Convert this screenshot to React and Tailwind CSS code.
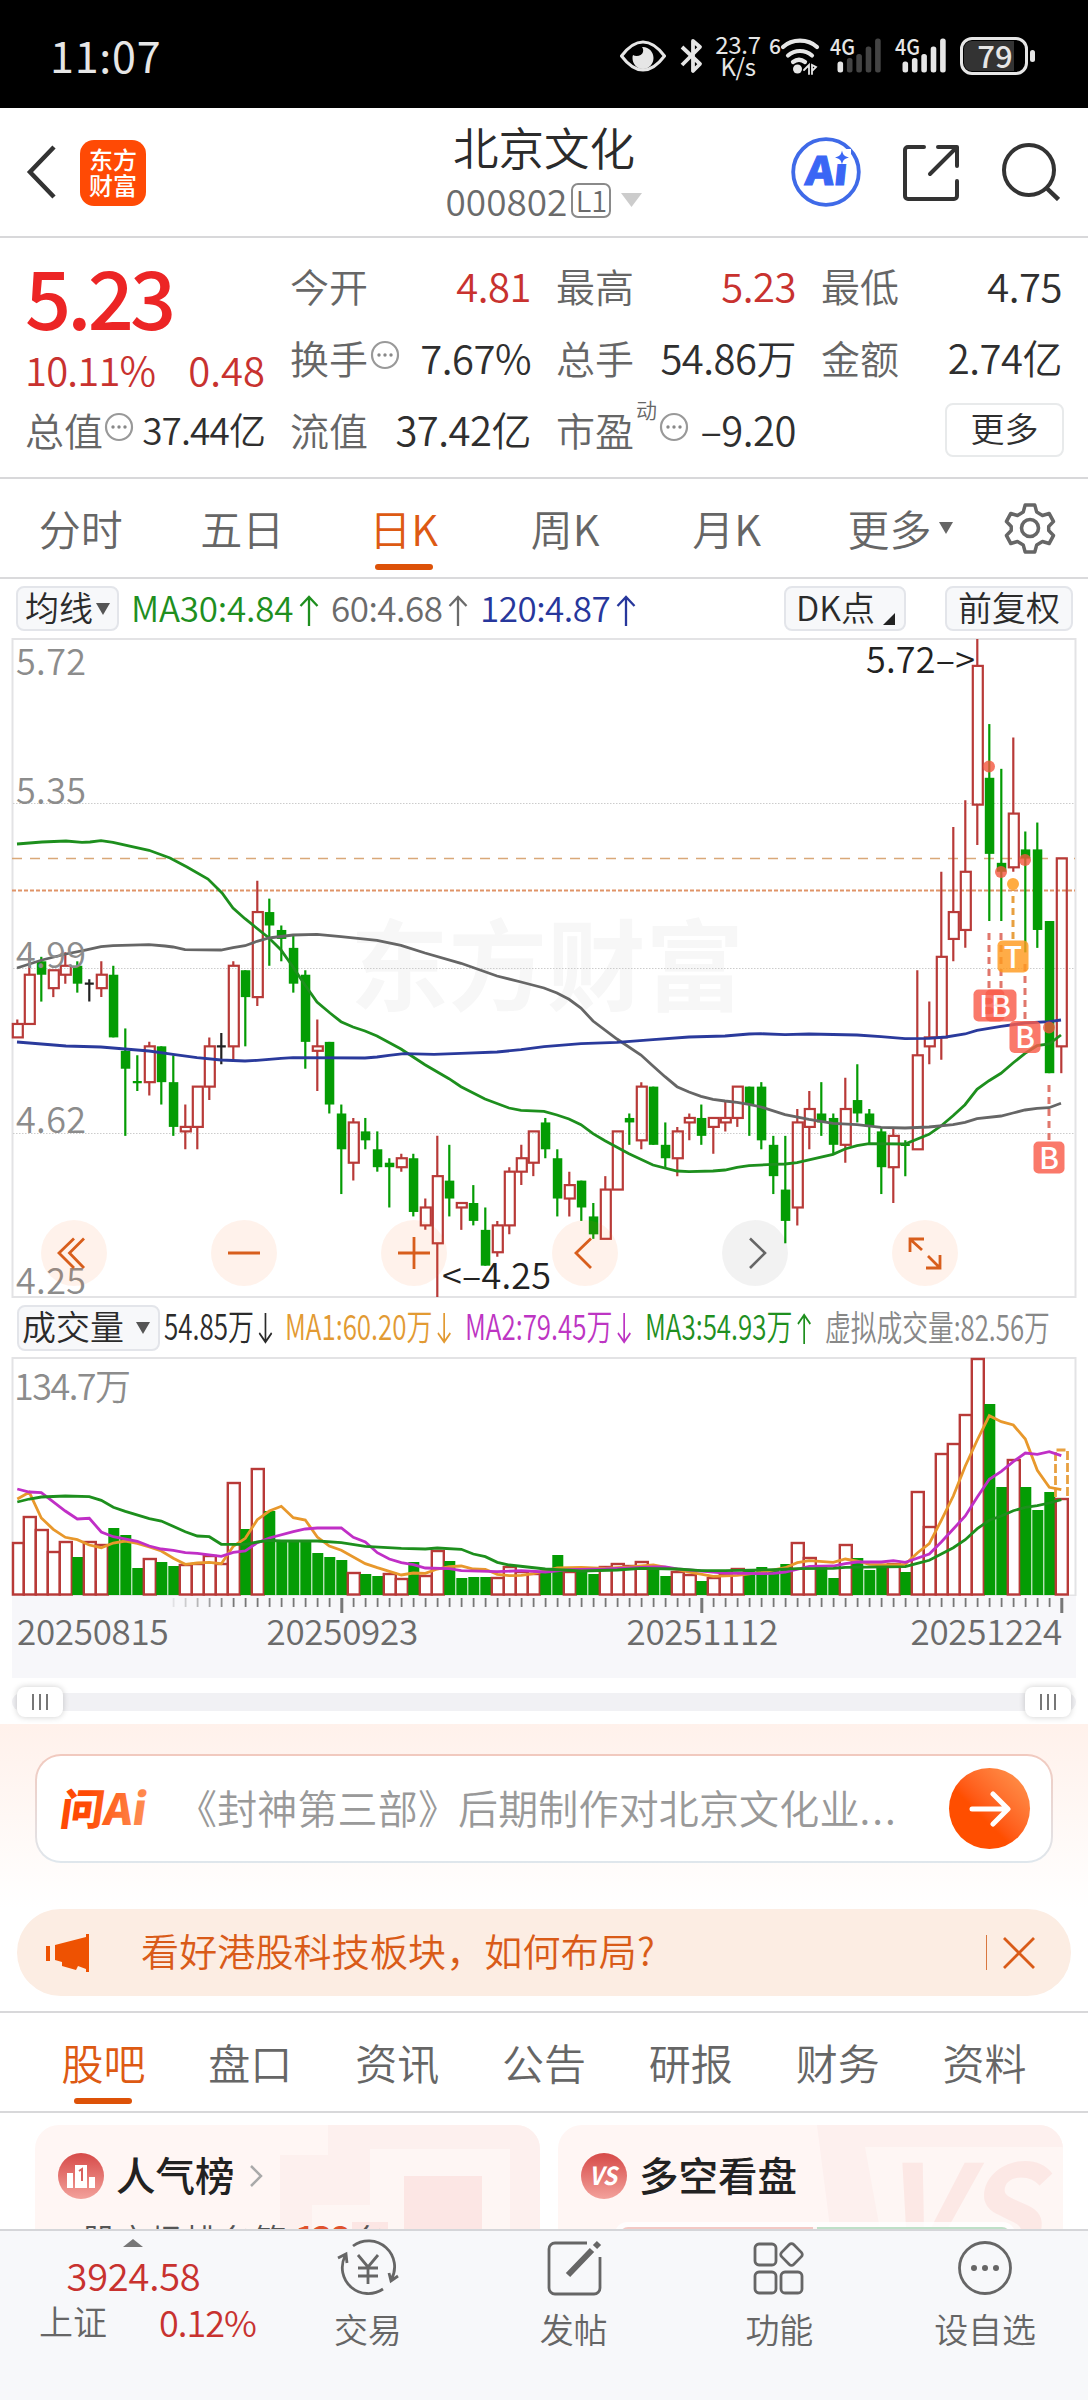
import React from "react";

const RED = "#b83a38";
const GREEN = "#049c04";
const STEP = 12;
const X0 = 17.3;

// [color, high, body top, body bottom, low], in cents above 4.25
const candles = [
  ["r", 62, 61, 58, 58], ["r", 77, 72, 61, 61], ["g", 76, 75, 72, 66], ["r", 73, 73, 69, 67],
  ["r", 77, 74, 72, 70], ["g", 75, 74, 70, 68], ["k", 71, 70, 70, 66], ["r", 75, 72, 69, 67],
  ["g", 74, 72, 58, 58], ["g", 60, 55, 51, 36], ["g", 54, 48, 48, 46], ["r", 57, 56, 48, 45],
  ["g", 56, 56, 48, 43], ["g", 54, 48, 38, 36], ["r", 43, 38, 37, 33], ["r", 47, 47, 38, 33],
  ["r", 58, 56, 47, 44], ["k", 59, 56, 56, 52], ["r", 75, 74, 56, 53], ["g", 73, 73, 67, 56],
  ["r", 93, 86, 67, 65], ["g", 89, 86, 83, 74], ["g", 83, 82, 80, 75], ["g", 81, 78, 70, 68],
  ["g", 73, 72, 57, 51], ["r", 62, 56, 55, 46], ["g", 57, 57, 43, 41], ["g", 43, 41, 33, 23],
  ["r", 40, 39, 30, 26], ["g", 40, 37, 35, 33], ["g", 37, 33, 29, 28], ["g", 31, 30, 29, 20],
  ["r", 32, 31, 29, 28], ["g", 32, 31, 19, 18], ["r", 22, 20, 16, 15], ["r", 36, 27, 12, 0],
  ["g", 34, 26, 22, 18], ["r", 21, 21, 20, 15], ["g", 25, 21, 17, 16], ["g", 20, 15, 7, 7],
  ["r", 17, 16, 10, 9], ["r", 29, 28, 16, 14], ["r", 34, 31, 28, 25], ["r", 37, 37, 30, 27],
  ["g", 40, 39, 33, 31], ["g", 33, 31, 22, 18], ["r", 28, 25, 22, 18], ["g", 26, 26, 20, 17],
  ["g", 21, 18, 14, 13], ["r", 27, 24, 13, 13], ["r", 37, 37, 24, 24], ["g", 41, 40, 39, 34],
  ["r", 48, 47, 35, 33], ["g", 47, 47, 34, 34], ["g", 39, 34, 31, 29], ["r", 38, 37, 31, 27],
  ["r", 41, 40, 39, 35], ["g", 43, 40, 36, 34], ["r", 40, 40, 38, 32], ["r", 44, 40, 39, 37],
  ["r", 47, 47, 40, 38], ["g", 47, 47, 43, 36], ["g", 48, 47, 35, 33], ["g", 36, 34, 27, 23],
  ["g", 36, 24, 17, 12], ["r", 42, 39, 20, 16], ["r", 46, 42, 38, 33], ["g", 48, 41, 39, 36],
  ["g", 41, 40, 34, 32], ["r", 49, 42, 34, 30], ["g", 52, 44, 41, 39], ["g", 42, 41, 38, 34],
  ["g", 38, 37, 29, 23], ["r", 38, 36, 29, 21], ["g", 35, 34, 34, 27], ["r", 73, 54, 33, 33],
  ["r", 66, 58, 56, 52], ["r", 95, 76, 58, 53], ["r", 105, 86, 80, 75], ["r", 111, 95, 82, 78],
  ["r", 147, 141, 110, 101], ["g", 128, 116, 99, 84], ["g", 118, 97, 95, 84], ["r", 125, 108, 96, 95],
  ["g", 104, 100, 98, 77], ["g", 106, 100, 82, 78], ["g", 84, 84, 50, 50], ["r", 98, 98, 56, 50],
];

const ma30 =
  "17,844 42,842 66,841 82,842.3 90,842 101,840.7 113,842.3 132,846.7 149,850.3 170,858 187,867 208,879 222,893 233,908 245,918.7 269,938 281,950 293,967 305,985 317,1002 330,1013 341,1021.7 353,1027 365,1031 377,1036 401,1049 425,1064.7 449,1078.7 461,1086.7 485,1099 509,1108 521,1110.3 544,1111.3 557,1115 569,1119 581,1124.7 593,1133.7 605,1140.7 629,1153.7 653,1165 677,1171 689,1171.7 713,1171 725,1170 737,1167.3 749,1165.7 773,1164.3 785,1164 797,1162.7 833,1154.3 845,1149 857,1145.7 869,1143.7 905,1144 929,1134.3 941,1126 953,1115.7 965,1104.7 977,1089.3 989,1080.7 1001,1073.3 1013,1063 1025,1053.3 1037,1045.7 1049,1044 1061,1035";
const ma60 =
  "17,968 42,960 66,954 83,950.7 101,946.7 113,945.7 149,944.7 165,946 173,947 185,949.7 221,950 233,947.7 245,945.7 257,941.3 269,938 293,935 317,934.3 341,936.7 377,940.3 401,945.3 425,953 461,963.3 497,976 521,982 544,988 557,993 569,999.3 581,1008 593,1021 617,1039 641,1055 653,1066 665,1076.7 677,1086.7 689,1092 701,1096.3 713,1099.3 725,1101 737,1102.3 749,1104.3 761,1107 785,1114.7 809,1119.3 833,1123.3 857,1124.7 881,1127.3 905,1128 929,1127 953,1124.7 965,1122.3 977,1118.7 1001,1116 1013,1113 1025,1110 1037,1108.3 1049,1107.7 1061,1103.3";
const ma120 =
  "17,1042 66,1046 101,1047 125,1049 149,1051 173,1054.3 197,1057.7 221,1060 245,1061 257,1060.3 281,1058.3 293,1057.7 365,1058 377,1057 389,1055.3 404,1053.7 434,1054.3 461,1053.3 497,1052 521,1049.7 544,1046.7 581,1043.7 617,1042.3 653,1039.7 689,1037 725,1036 749,1034 761,1033.7 785,1034.7 809,1034 857,1035 881,1036.7 905,1038.7 929,1038.3 946,1037 965,1034 977,1030.3 1001,1026.3 1025,1023 1049,1021.7 1061,1020";

// volume bars: positive closes up (hollow), negative closes down (solid)
const volumes = [
  52, 78, 65, 43, 53, -38, 53, 50, -67, -60, -27, 36, -33, -29, 30, 31, 39, 31, 112, -66, 126, -84,
  -55, -55, -55, -42, -38, -35, 22, -21, -19, 21, 16, -33, 19, 44, -34, -17, -18, -18, 17, 28, 23, 21,
  -23, -40, 23, -25, -21, 28, 31, 29, 33, -25, -19, 23, 20, -14, 17, 21, 26, -25, -28, -25, -31, 52,
  37, -28, -17, 50, -37, -25, -30, 31, -23, 103, 68, 141, 151, 180, 236, -191, -108, 135, -108, -85, -103, 96,
];
const volMa1 = [[0,96],[1,102.7],[2,77],[3,65.7],[4,57.7],[5,55.3],[6,50],[7,47.3],[8,52],[9,54],[10,51.7],[11,48],[12,44],[13,36.7],[14,30.7],[15,32],[16,32.7],[17,31.3],[18,48.7],[19,56.7],[20,75.3],[21,84],[22,88.7],[23,77.3],[24,75],[25,58],[26,49],[27,44.7],[29,31.3],[30,27.3],[32,20],[33,22],[34,21.7],[35,26],[36,28.3],[37,29],[38,26],[39,25.7],[40,20.7],[41,19.3],[42,19.7],[43,21.3],[45,27],[47,27.7],[49,26.7],[51,28],[53,30],[55,25.3],[56,23],[58,18.7],[60,19.7],[62,22.7],[64,27.3],[65,32.3],[66,34.3],[68,32.7],[69,36],[70,34],[71,30.7],[73,30],[74,30.7],[75,42],[76,51.3],[77,74.7],[78,99],[79,129],[80,155],[81,179.3],[82,173.3],[83,170],[84,156],[85,124.7],[86,107.7],[87,105.3]];
const volMa2 = [[0,106],[1,103],[2,102.3],[4,84],[5,76],[6,76.7],[7,63],[8,58.3],[10,53.7],[11,49],[12,46],[13,44.7],[14,42.3],[15,41.7],[17,38.7],[18,42.7],[19,44],[20,52.3],[21,57],[23,63.3],[24,66],[25,67],[27,67],[28,57.7],[29,53],[30,42.3],[31,36],[32,32.3],[33,30.3],[34,27],[36,26.3],[37,24.3],[40,23.3],[42,24.3],[44,23],[46,25.3],[49,26],[51,27],[53,28],[54,28],[55,26],[57,24],[59,22],[62,21.3],[63,21.7],[64,23],[66,28.7],[68,29],[69,31.3],[70,33],[72,33],[73,34.3],[74,32.7],[76,41],[77,53],[78,66],[79,79],[80,98],[81,115.7],[82,123.7],[83,133.3],[84,142],[85,140.7],[86,143.3],[87,139.3]];
const volMa3 = [[0,93],[1,96],[2,98],[4,99],[6,98.3],[7,94.7],[8,87.7],[9,83.7],[11,76.3],[12,74],[14,63.3],[15,59],[16,58.3],[17,50.7],[19,50.7],[20,53],[21,54.7],[22,54],[25,54],[27,52.3],[29,48.7],[32,46.7],[34,46],[35,47],[37,45.7],[38,41],[39,38.3],[40,32.7],[41,30],[44,26],[47,24],[50,25],[52,26.7],[55,26],[57,24.3],[59,24.3],[63,25.3],[65,26.3],[68,26.7],[69,27.7],[74,28.3],[75,31.7],[76,34.7],[77,41],[78,47.3],[79,55.3],[80,66.3],[81,74.7],[82,79],[83,84.3],[84,87.7],[85,89.3],[86,92],[87,95.3]];

const cx = (i) => X0 + i * STEP;
const py = (n) => 1297 - n * 4.476;
const volPoints = (list) => list.map(([i, h]) => `${cx(i)},${1595 - h}`).join(" ");

function Signal({ dim }) {
  return (
    <svg width="52" height="40" viewBox="0 0 52 40" className="overflow-visible" fontFamily="inherit">
      <text x="0" y="19" fontSize="22" fontWeight="500" fill="#e6e6e6" textLength="25" lengthAdjust="spacingAndGlyphs">4G</text>
      {[25.5, 22, 18, 10.5, 2.5].map((top, i) => (
        <rect key={i} x={7.5 + i * 9.4} y={top} width="5.6" height={36.5 - top} rx="2.5" fill={dim && i > 0 ? "#444" : "#e6e6e6"} />
      ))}
    </svg>
  );
}

function StatusBar() {
  return (
    <div className="h-[108px] bg-black text-[#e6e6e6] flex items-center pl-[50px] pr-[53px] pt-[4px] font-normal">
      <div className="text-[43px] leading-none tracking-[0.8px] mt-[-4px]">11:07</div>
      <div className="ml-auto flex items-center">
        <svg width="46" height="36" viewBox="0 0 46 36">
          <path d="M1.500 18C9 8 15 4 23 4s14 4 21.500 14C37 28 31 32 23 32S9 28 1.500 18Z" fill="none" stroke="#e6e6e6" strokeWidth="3" />
          <path d="M23 9c6 0 10.500 5 10.500 11S29 31 23 31s-10.500-5-10.500-11c0-1 0-2 .5-3 3 2 9 1 10-3 .5-2 0-4-1-5Z" fill="#e6e6e6" />
        </svg>
        <svg className="ml-[14px]" width="23" height="36" viewBox="0 0 23 36" fill="none" stroke="#e6e6e6" strokeWidth="3.800" strokeLinejoin="round">
          <path d="m2 9 18 17-7 7V3l7 6L2 27" />
        </svg>
        <div className="ml-[12px] mt-[-3px] w-[46px] text-[24px] leading-[22px] text-center tracking-[-0.3px]">
          <div>23.7</div>
          <div>K/s</div>
        </div>
        <svg className="ml-[9px] overflow-visible" width="50" height="40" viewBox="0 0 50 40" fill="none" stroke="#e6e6e6" strokeWidth="4.200" strokeLinecap="round" fontFamily="inherit">
          <text x="-1" y="18" fontSize="21" fontWeight="500" fill="#e6e6e6" stroke="none">6</text>
          <path d="M13 11c9-8.500 25-8.500 34 0M18 19.500c7-6 17-6 24 0" />
          <path d="M23 26c4-3 8-3 12 0" />
          <circle cx="27.500" cy="33" r="4.500" fill="#e6e6e6" stroke="none" />
          <path d="m34 34 5-5v9M42 38v-9l4 2-4 4" strokeWidth="1.800" />
        </svg>
        <div className="ml-[10px]"><Signal dim /></div>
        <div className="ml-[13px]"><Signal /></div>
        <div className="ml-[13px] w-[68px] h-[38px] rounded-[12px] border-[3px] border-[#e6e6e6] p-[1px]">
          <div className="h-full w-[50px] rounded-l-[8px] bg-[#333]">
            <div className="w-[62px] text-center text-[31px] leading-[28px] font-medium">79</div>
          </div>
        </div>
        <div className="ml-[2px] w-[5px] h-[12px] rounded-full bg-[#e6e6e6]" />
      </div>
    </div>
  );
}

function Header() {
  return (
    <div className="h-[130px] border-b-2 border-[#d8d8da] flex items-center justify-between pl-[26px] pr-[28px]">
      <div className="flex items-center w-[330px]">
        <svg width="31" height="54" viewBox="0 0 31 54" fill="none" stroke="#333" strokeWidth="4.500">
          <path d="M28 2 4 27l24 25" />
        </svg>
        <div className="ml-[23px] mt-[1px] size-[66px] rounded-[14px] bg-[#ff4a05] text-white text-[24px] leading-[26px] font-medium text-center flex flex-col justify-center">
          <div className="mt-[-2px]">东方</div>
          <div>财富</div>
        </div>
      </div>
      <div className="flex flex-col items-center pl-[2px]">
        <div className="text-[45.500px] leading-[56px] text-[#2b2b2b]">北京文化</div>
        <div className="flex items-center h-[52px] text-[37px] leading-none text-[#6b6b6b]">
          <span>000802</span>
          <span className="ml-[4px] w-[40px] h-[35px] border-2 border-[#8a8a8a] rounded-[7px] text-[29px] leading-[29px] text-center">L1</span>
          <svg className="ml-[10px]" width="21" height="14"><path d="M0 0h21L10.500 14Z" fill="#ccc" /></svg>
        </div>
      </div>
      <div className="flex items-center justify-end w-[330px]">
        <svg width="70" height="70" viewBox="0 0 70 70" fontFamily="inherit">
          <circle cx="35" cy="35" r="32.800" fill="none" stroke="#3f6ae8" strokeWidth="3.800" />
          <g fill="#3a66f5" stroke="#3a66f5" strokeWidth="1" fontSize="39" fontWeight="900">
            <text x="14" y="48" textLength="42" lengthAdjust="spacingAndGlyphs" transform="translate(4.500 0) skewX(-6)">Ai</text>
          </g>
          <path d="M42 12h18v15H42Z" fill="#fff" />
          <path d="M51 14.500c1 4.500 2.500 6 7 7-4.500 1-6 2.500-7 7-1-4.500-2.500-6-7-7 4.500-1 6-2.500 7-7Z" fill="#3a66f5" transform="translate(0 -1)" />
        </svg>
        <svg className="ml-[41px]" width="57" height="57" viewBox="0 0 57 57" fill="none" stroke="#333" strokeWidth="4" strokeLinecap="round" strokeLinejoin="round">
          <path d="M22 3H6a3 3 0 0 0-3 3v46a3 3 0 0 0 3 3h46a3 3 0 0 0 3-3V37M36 3h19v19M54 4 28 30" />
        </svg>
        <svg className="ml-[42px]" width="59" height="58" viewBox="0 0 59 58" fill="none" stroke="#333" strokeWidth="4">
          <circle cx="28" cy="27" r="25" />
          <path d="m45.500 45 12 11.500" strokeWidth="4.500" />
        </svg>
      </div>
    </div>
  );
}

function Dots() {
  return (
    <svg width="30" height="30" viewBox="0 0 30 30" className="shrink-0">
      <circle cx="15" cy="15" r="13" fill="none" stroke="#999" strokeWidth="2.200" />
      <circle cx="9" cy="15" r="1.700" fill="#888" />
      <circle cx="15" cy="15" r="1.700" fill="#888" />
      <circle cx="21" cy="15" r="1.700" fill="#888" />
    </svg>
  );
}

function Item({ label, value, dots, sup, red }) {
  return (
    <div className="flex items-center h-[72px] text-[39px] leading-none whitespace-nowrap">
      <span className="text-[#666]">{label}</span>
      {sup && <span className="text-[21px] leading-[24px] text-[#666] self-start mt-[4px] ml-[2px]">{sup}</span>}
      {dots && <span className="ml-[2px] mt-[-4px]"><Dots /></span>}
      <span className={red ? "ml-auto text-[40px] tracking-[-0.500px] text-[#c8322f]" : "ml-auto text-[40px] tracking-[-0.500px] text-[#2f2f2f]"}>{value}</span>
    </div>
  );
}

function Quote() {
  return (
    <div className="h-[241px] border-b-2 border-[#d8d8da] flex gap-[25px] pl-[25px] pr-[25px] pt-[11px]">
      <div className="w-[240px]">
        <div className="h-[96px] text-[81px] leading-[92px] font-medium text-[#ec2525] tracking-[-3.800px]">5.23</div>
        <div className="h-[48px] flex justify-between items-center text-[40px] leading-none text-[#c8322f]">
          <span className="tracking-[-0.800px]">10.11%</span>
          <span>0.48</span>
        </div>
        <div className="flex items-center h-[72px] text-[39px] leading-none whitespace-nowrap">
          <span className="text-[#666]">总值</span>
          <span className="ml-[1px] mt-[-4px]"><Dots /></span>
          <span className="ml-auto text-[37px] tracking-[-0.900px] text-[#2f2f2f]">37.44亿</span>
        </div>
      </div>
      <div className="w-[241px]">
        <Item label="今开" value="4.81" red />
        <Item label="换手" value="7.67%" dots />
        <Item label="流值" value="37.42亿" />
      </div>
      <div className="w-[240px]">
        <Item label="最高" value="5.23" red />
        <Item label="总手" value="54.86万" />
        <Item label="市盈" value="–9.20" sup="动" dots />
      </div>
      <div className="w-[241px]">
        <Item label="最低" value="4.75" />
        <Item label="金额" value="2.74亿" />
        <div className="flex justify-end pt-[10px] mr-[-2px]">
          <div className="w-[119px] h-[54px] rounded-[8px] border-2 border-[#e8eaeb] text-[34px] leading-[46px] text-center text-[#2f2f2f]">更多</div>
        </div>
      </div>
    </div>
  );
}

function PeriodTabs() {
  const tabs = ["分时", "五日", "日K", "周K", "月K"];
  return (
    <div className="h-[100px] border-b-2 border-[#dadadc] flex items-center text-[42px] leading-none text-[#666] pr-[1px]">
      {tabs.map((t) => (
        <div key={t} className={t === "日K" ? "w-[161.500px] h-full flex flex-col items-center text-[#dd5a13]" : "w-[161.500px] h-full flex flex-col items-center"}>
          <div className="h-[85px] flex items-center pt-[12px]">{t}</div>
          {t === "日K" && <div className="w-[58px] h-[6px] rounded-full bg-[#dd5208]" />}
        </div>
      ))}
      <div className="w-[145px] h-[85px] self-start flex items-center justify-end pt-[12px]">
        更多
        <svg className="ml-[7px]" width="14" height="12"><path d="M0 0h14L7 12Z" fill="#666" /></svg>
      </div>
      <svg className="ml-[51px]" width="52" height="52" viewBox="0 0 52 52" fill="none" stroke="#666" strokeWidth="3.600" strokeLinejoin="round">
        <path d="M21 3h10l2 7 6 3.500 7-2 4.500 8-5 5v4l5 5-4.500 8-7-2-6 3.500-2 7H21l-2-7-6-3.500-7 2-4.500-8 5-5v-4l-5-5 4.500-8 7 2 6-3.500Z" transform="translate(1 0) scale(.96 1)" />
        <circle cx="26" cy="26" r="8.500" />
      </svg>
    </div>
  );
}

function IndicatorBar() {
  return (
    <div className="h-[59px] flex items-center pl-[16px] pr-[15px] text-[34px] leading-none whitespace-nowrap *:shrink-0">
      <div className="w-[103px] h-[45px] rounded-[8px] border-2 border-[#e3e5ea] bg-[#f7f8fa] flex items-center pl-[7px] pb-[3px] text-[#2b2b2b]">
        均线
        <svg className="ml-[3px] mt-[3px]" width="14" height="12"><path d="M0 0h14L7 12Z" fill="#555" /></svg>
      </div>
      <div className="ml-[12px] mt-[-3px] w-[200px] text-[35px] text-[#1f8f1f] tracking-[-0.200px]">MA30:4.84<Arrow up /></div>
      <div className="w-[149px] mt-[-3px] text-[35px] text-[#6b6b6b] tracking-[-0.500px]">60:4.68<Arrow up /></div>
      <div className="mt-[-3px] text-[35px] text-[#27379c] tracking-[-0.500px]">120:4.87<Arrow up /></div>
      <div className="ml-auto w-[122px] h-[45px] rounded-[8px] border-2 border-[#e3e5ea] bg-[#f7f8fa] flex items-center pl-[10px] pb-[3px] text-[#2b2b2b]">
        DK点
        <svg className="ml-[8px] mt-[24px]" width="12" height="12"><path d="M12 0v12H0Z" fill="#222" /></svg>
      </div>
      <div className="ml-[39px] w-[128px] h-[45px] rounded-[8px] border-2 border-[#e3e5ea] bg-[#f7f8fa] flex items-center justify-center pb-[3px] text-[#2b2b2b]">前复权</div>
    </div>
  );
}

function Arrow({ up }) {
  return (
    <svg className="inline-block ml-[6px] align-[-4px]" width="20" height="31" viewBox="0 0 20 31" fill="none" stroke="currentColor" strokeWidth="2.300">
      <path d={up ? "M10 31V2M1.500 11 10 2l8.500 9" : "M10 0v29M1.500 20l8.500 9 8.500-9"} />
    </svg>
  );
}

function Badge({ x, y, t, color }) {
  return (
    <g opacity="0.82">
      <rect x={x - 15.5} y={y - 16} width="31" height="32" rx="5" fill={color} />
      <text x={x} y={y + 11} fontSize="30" fontWeight="500" textAnchor="middle" fill="#fff">{t}</text>
    </g>
  );
}

function PriceChart() {
  return (
    <svg className="block overflow-visible" width="1088" height="660" viewBox="0 638 1088 660" fontFamily="inherit">
      <text x="350" y="1003" fontSize="98.500" fontWeight="700" fill="#f7f7f7">东方财富</text>
      <rect x="12.500" y="639" width="1063" height="658" fill="none" stroke="#e3e3e5" strokeWidth="2" />
      {[803.5, 968.5, 1133.5].map((y) => (
        <path key={y} d={`M13 ${y}H1075`} stroke="#ccc" strokeDasharray="1.500 1.500" />
      ))}
      <path d="M12 858.500H1075" stroke="#d9a878" strokeWidth="1.500" strokeDasharray="10 8" />
      <path d="M12 890.500H1075" stroke="#e09468" strokeWidth="1.800" strokeDasharray="4 2" />
      {candles.map(([c, h, t, b, l], i) => {
        const x = cx(i);
        if (t === b) {
          return <path key={i} d={`M${x} ${py(h)}V${py(l)}M${x - 4.5} ${py(t)}h9`} stroke={c === "k" ? "#222" : GREEN} strokeWidth="2.200" />;
        }
        if (c === "g") {
          return (
            <g key={i} fill={GREEN}>
              <rect x={x - 1.1} y={py(h)} width="2.200" height={py(l) - py(h)} />
              <rect x={x - 4.5} y={py(t)} width="9.500" height={py(b) - py(t)} />
            </g>
          );
        }
        return (
          <g key={i} fill="none" stroke={RED} strokeWidth="2.200">
            <path d={`M${x} ${py(h)}V${py(t)}M${x} ${py(b)}V${py(l)}`} />
            <rect x={x - 4.5} y={py(t)} width="10" height={py(b) - py(t)} />
          </g>
        );
      })}
      <g fill="none" strokeWidth="2.800">
        <polyline points={ma30} stroke="#1d8f1d" />
        <polyline points={ma60} stroke="#666" />
        <polyline points={ma120} stroke="#2a3a9c" />
      </g>

      {/* trade markers */}
      <g stroke="#e0776c" strokeWidth="3" strokeDasharray="7 5">
        <path d="M989 933v56M1001 933v56" />
        <path d="M1025 964v57M1049 1085v56" />
      </g>
      <path d="M1013 884v56" stroke="#e8a040" strokeWidth="3" strokeDasharray="7 5" />
      <g fill="#f4563f" opacity="0.8">
        <circle cx="989" cy="766.500" r="6" />
        <circle cx="1001" cy="872" r="6" />
        <circle cx="1025" cy="860" r="6" />
        <circle cx="1049" cy="1027.500" r="6" />
      </g>
      <circle cx="1013" cy="884" r="6" fill="#ffab40" />
      <Badge x={989} y={1005.5} t="B" color="#f95c4a" />
      <Badge x={1001} y={1005.5} t="B" color="#f95c4a" />
      <Badge x={1025} y={1037} t="B" color="#f95c4a" />
      <Badge x={1049} y={1157.5} t="B" color="#f95c4a" />
      <Badge x={1013} y={956.5} t="T" color="#ff9b1f" />

      <g fontSize="36" fill="#8c8c8c">
        <text x="16" y="675" textLength="70">5.72</text>
        <text x="16" y="803.500" textLength="70">5.35</text>
        <text x="16" y="968" textLength="70">4.99</text>
        <text x="16" y="1132.500" textLength="70">4.62</text>
        <text x="16" y="1293.500" textLength="70">4.25</text>
      </g>
      <g fontSize="36" fill="#222">
        <text x="866" y="673" textLength="109">5.72–&gt;</text>
        <text x="442" y="1289" textLength="109">&lt;–4.25</text>
      </g>

      {/* floating controls */}
      <g>
        {[74, 244, 414, 585, 925].map((x) => (
          <circle key={x} cx={x} cy="1253" r="33" fill="#ff6a20" fillOpacity="0.09" />
        ))}
        <circle cx="755" cy="1253" r="33" fill="#000" fillOpacity="0.05" />
      </g>
      <g fill="none" stroke="#d85e1c" strokeWidth="2.800">
        <path d="M74 1238.500 59 1253l15 15M84 1238.500 69.500 1253l14.500 15" />
        <path d="M228 1253h32M398 1253h32M414 1237v32" />
        <path d="m591 1238.500-15 14.500 15 15" />
        <path d="M910 1252v-13h14M911 1240l11 10M940 1255v13h-14M939 1267l-11-11" />
      </g>
      <path d="m750 1238.500 15 14.500-15 15" fill="none" stroke="#666" strokeWidth="2.600" />
    </svg>
  );
}

function VolumeBar() {
  return (
    <div className="h-[59px] flex items-center pl-[17px] text-[35.500px] leading-none whitespace-nowrap *:shrink-0">
      <div className="w-[143px] h-[46px] rounded-[8px] border-2 border-[#e3e5ea] bg-[#f7f8fa] flex items-center pl-[3px] pb-[3px] text-[34px] text-[#2b2b2b]">
        成交量
        <svg className="ml-[12px] mt-[3px]" width="14" height="12"><path d="M0 0h14L7 12Z" fill="#555" /></svg>
      </div>
      <div className="ml-[4px] mt-[-4px] w-[121px] text-[#2b2b2b]"><div className="w-max origin-left scale-x-[0.730]">54.85万<Arrow /></div></div>
      <div className="w-[180px] mt-[-4px] text-[#e29a33]"><div className="w-max origin-left scale-x-[0.730]">MA1:60.20万<Arrow /></div></div>
      <div className="w-[180px] mt-[-4px] text-[#bd35c3]"><div className="w-max origin-left scale-x-[0.730]">MA2:79.45万<Arrow /></div></div>
      <div className="w-[180px] mt-[-4px] text-[#1f8f1f]"><div className="w-max origin-left scale-x-[0.730]">MA3:54.93万<Arrow up /></div></div>
      <div className="w-[222px] mt-[-4px] text-[#888]"><div className="w-max origin-left scale-x-[0.725]">虚拟成交量:82.56万</div></div>
    </div>
  );
}

function VolumeChart() {
  return (
    <svg className="block" width="1088" height="239" viewBox="0 1357 1088 239" fontFamily="inherit">
      <rect x="12.500" y="1358" width="1063" height="237.500" fill="none" stroke="#e3e3e5" strokeWidth="2" />
      <text x="14" y="1400" fontSize="36" fill="#8c8c8c" textLength="117">134.7万</text>
      {volumes.map((v, i) =>
        v < 0 ? (
          <rect key={i} x={cx(i) - 5} y={1595 + v} width="11" height={-v} fill={GREEN} />
        ) : (
          <rect key={i} x={cx(i) - (i === 0 ? 4.3 : 5.5)} y={1595 - v} width={i === 0 ? 10.8 : 12} height={v - 0.5} fill="#fff" stroke={RED} strokeWidth="2.400" />
        )
      )}
      <path d="M1055.500 1497V1450h12v47" fill="none" stroke="#e8a040" strokeWidth="2.800" strokeDasharray="9 3" />
      <g fill="none" strokeWidth="2.800">
        <polyline points={volPoints(volMa1)} stroke="#e8982c" />
        <polyline points={volPoints(volMa2)} stroke="#c02fc6" />
        <polyline points={volPoints(volMa3)} stroke="#1d8f1d" />
      </g>
    </svg>
  );
}

function TimeAxis() {
  const ticks = Array.from({ length: 75 }, (_, k) => k + 13);
  return (
    <div className="ml-[12px] mr-[12px] h-[82px] bg-[#f7f7fa]">
      <svg className="block" width="1064" height="17" viewBox="12 0 1064 17">
        {ticks.map((i) => {
          const major = i === 27 || i === 57 || i === 87;
          return <rect key={i} x={cx(i) - (major ? 1 : 0.6)} y="2" width={major ? 3 : 1.8} height={major ? 15 : 9} fill="#777" opacity={i < 18 ? (i - 12) / 6 : 1} />;
        })}
      </svg>
      <div className="flex pl-[5px] text-[35px] leading-[34px] text-[#6b6b6b] tracking-[-0.300px]">
        <span className="w-[249.500px]">20250815</span>
        <span className="w-[360px]">20250923</span>
        <span className="w-[284px]">20251112</span>
        <span>20251224</span>
      </div>
    </div>
  );
}

function RangeSlider() {
  return (
    <div className="h-[46px] px-[12px] pt-[15px]">
      <div className="h-[18px] rounded-full bg-[#f1f1f4] flex items-center justify-between px-[5px]">
        {[0, 1].map((k) => (
          <div key={k} className="w-[46px] h-[30px] rounded-[8px] bg-white shadow-[0_0_6px_rgba(0,0,0,0.2)] flex items-center justify-center gap-[5px]">
            <i className="w-[2px] h-[16px] bg-[#777]" />
            <i className="w-[2px] h-[16px] bg-[#777]" />
            <i className="w-[2px] h-[16px] bg-[#777]" />
          </div>
        ))}
      </div>
    </div>
  );
}

function AskAi() {
  return (
    <div className="h-[185px] px-[35px] pt-[30px] bg-linear-to-b from-[#fff1eb] via-[#fff8f5] to-white">
      <div className="h-[109px] rounded-[26px] bg-linear-to-b from-[#f1c9be] to-[#dfe7ed] p-[2px]">
        <div className="h-full rounded-[24px] bg-white flex items-center pl-[20px] pr-[21px]">
          <svg width="96" height="44" viewBox="0 0 96 44" fontFamily="inherit" className="overflow-visible">
            <defs>
              <linearGradient id="ask" x1="0" x2="1">
                <stop offset="0.300" stopColor="#ff4a05" />
                <stop offset="1" stopColor="#ff8f55" />
              </linearGradient>
            </defs>
            <text x="7" y="38" fontSize="43" fontWeight="900" fill="url(#ask)" textLength="86" lengthAdjust="spacingAndGlyphs" transform="skewX(-8)">问Ai</text>
          </svg>
          <div className="ml-[24px] mt-[-4px] text-[40px] leading-none tracking-[0.150px] text-[#999] whitespace-nowrap">《封神第三部》后期制作对北京文化业<span className="tracking-[2px]">...</span></div>
          <div className="ml-auto size-[81px] shrink-0 rounded-full bg-linear-to-tr from-[#ff4e00] from-40% to-[#ff9850] flex items-center justify-center">
            <svg width="42" height="36" viewBox="0 0 42 36" fill="none" stroke="#fff" strokeWidth="5" strokeLinecap="round" strokeLinejoin="round">
              <path d="M3 18h35M24 3l15 15-15 15" />
            </svg>
          </div>
        </div>
      </div>
    </div>
  );
}

function Notice() {
  return (
    <div className="mx-[17px] h-[87px] rounded-[44px] bg-[#fcede3] flex items-center pl-[29px] pr-[36px] text-[#d95b18]">
      <svg width="44" height="38" viewBox="0 0 44 38" fill="#ee5202">
        <path d="M0 12h4v15H0ZM9 11 40 3v-3h3v38h-3v-3l-8-3-2 4-14-4v-4L9 26Z" />
      </svg>
      <div className="ml-[51px] mt-[-5px] text-[38px] leading-none tracking-[0.150px]">看好港股科技板块，如何布局?</div>
      <div className="ml-auto w-[1px] h-[35px] bg-[#d9773f]" />
      <svg className="ml-[16px]" width="32" height="32" viewBox="0 0 32 32" fill="none" stroke="#d95b18" strokeWidth="2.800">
        <path d="m1 1 30 30M31 1 1 31" />
      </svg>
    </div>
  );
}

function ContentTabs() {
  const tabs = ["股吧", "盘口", "资讯", "公告", "研报", "财务", "资料"];
  return (
    <div className="mt-[15px] h-[102px] border-y-2 border-[#d8d8da] flex px-[30px] text-[42px] leading-none text-[#666]">
      {tabs.map((t, i) => (
        <div key={t} className={i === 0 ? "flex-1 flex flex-col items-center text-[#dd5a13]" : "flex-1 flex flex-col items-center"}>
          <div className="h-[85px] flex items-center pt-[12px]">{t}</div>
          {i === 0 && <div className="w-[58px] h-[6px] rounded-full bg-[#dd5208]" />}
        </div>
      ))}
    </div>
  );
}

function Cards() {
  return (
    <div className="h-[116px] overflow-hidden pl-[35px] pr-[25px] pt-[12px] grid grid-cols-2 gap-[18px]">
      <div className="relative h-[200px] rounded-[24px] bg-[#fff6f4] overflow-hidden">
        <svg className="absolute right-0 top-0" width="260" height="110" viewBox="0 0 260 110">
          <path d="M48 0h212v110H0V30h48Z" fill="#fdf0ee" />
          <path d="M90 24h140v86H32V80h58Z" fill="#fef6f4" />
          <path d="M124 51h78v59h-78ZM72 97h36v13H72Z" fill="#fce6e4" />
        </svg>
        <div className="relative flex items-center h-[52px] mt-[25px] pl-[23px]">
          <svg width="46" height="46" viewBox="0 0 46 46">
            <defs>
              <linearGradient id="hot" x1="0" x2="0" y1="0" y2="1">
                <stop offset="0" stopColor="#d64a48" />
                <stop offset="1" stopColor="#f3a19b" />
              </linearGradient>
            </defs>
            <circle cx="23" cy="23" r="23" fill="url(#hot)" />
            <path d="M9 20h6v15H9ZM17 12h12v23H17ZM31 24h6v11h-6Z" fill="#fff" />
            <path d="m21 18 3-2v12" fill="none" stroke="#d9605c" strokeWidth="2" />
          </svg>
          <span className="ml-[12px] mt-[-4px] text-[39.500px] leading-none font-medium text-[#222]">人气榜</span>
          <svg className="ml-[14px]" width="14" height="22" viewBox="0 0 14 22" fill="none" stroke="#aaa" strokeWidth="2.500"><path d="m2 1 10 10L2 21" /></svg>
        </div>
        <div className="relative mt-[16px] pl-[27px] text-[34px] leading-[40px] text-[#555] whitespace-nowrap">
          A股市场排名第<span className="px-[8px] text-[38px] tracking-[-5px] font-medium text-[#e0522d]">136</span>名
        </div>
      </div>
      <div className="relative h-[200px] rounded-[24px] bg-[#fff6f4] overflow-hidden">
        <svg className="absolute right-0 top-0" width="260" height="110" viewBox="0 0 260 110" fontFamily="inherit">
          <path d="M14 0h246v110H28Z" fill="#fdf0ee" />
          <path d="M62 22h198v88H78Z" fill="#fef6f4" />
          <text x="76" y="134" fontSize="130" fontWeight="700" fontStyle="italic" fill="#fce8e5">VS</text>
        </svg>
        <div className="relative flex items-center h-[52px] mt-[25px] pl-[23px]">
          <svg width="46" height="46" viewBox="0 0 46 46" fontFamily="inherit">
            <circle cx="23" cy="23" r="23" fill="url(#hot)" />
            <text x="22" y="32" fontSize="25" fontWeight="700" fontStyle="italic" fill="#fff" textAnchor="middle" textLength="28" lengthAdjust="spacingAndGlyphs">VS</text>
          </svg>
          <span className="ml-[12px] mt-[-4px] text-[39.500px] leading-none font-medium text-[#222]">多空看盘</span>
        </div>
        <div className="relative mt-[20px] ml-[57px] mr-[48px] h-[40px] rounded-[12px] border-[5px] border-white/80 flex gap-[4px]">
          <div className="flex-1 rounded-l-[8px] bg-[#f3c9c5]" />
          <div className="flex-1 rounded-r-[8px] bg-[#bfe0c8]" />
        </div>
      </div>
    </div>
  );
}

function BottomNav() {
  return (
    <div className="h-[171px] bg-[#f7f8fa] border-t-2 border-[#d5d6d9] flex text-[34px] leading-none text-[#666]">
      <div className="w-[265px] flex flex-col">
        <svg className="ml-[123px] mt-[8px]" width="20" height="8"><path d="M10 0 20 8H0Z" fill="#777" /></svg>
        <div className="mt-[9px] w-[267px] text-center text-[38px] leading-[38px] text-[#c8322f] tracking-[-0.200px]">3924.58</div>
        <div className="mt-[9px] pl-[39px] flex items-center">
          <span>上证</span>
          <span className="ml-[52px] text-[36px] leading-[36px] text-[#c8322f] tracking-[-1px]">0.12%</span>
        </div>
      </div>
      <div className="flex-1 flex flex-col items-center pt-[8px]">
        <svg width="64" height="58" viewBox="0 0 64 58" fill="none" stroke="#666" strokeWidth="2.800">
          <path d="M17 7a26 26 0 0 1 38 34M47 50A26 26 0 0 1 9 17M2 19l8-4 1 9M62 37l-7 5-2-8" />
          <path d="m22 16 10 12 10-12M32 28v17M22 29h20M22 37h20" />
        </svg>
        <div className="mt-[15px]">交易</div>
      </div>
      <div className="flex-1 flex flex-col items-center pt-[8px]">
        <svg width="56" height="58" viewBox="0 0 56 58" fill="none" stroke="#666" strokeWidth="2.800">
          <path d="M41 4H9a6 6 0 0 0-6 6v39a6 6 0 0 0 6 6h39a6 6 0 0 0 6-6V18" />
          <path d="M22 36 46 11M49 8l4-4" strokeWidth="6" />
        </svg>
        <div className="mt-[15px]">发帖</div>
      </div>
      <div className="flex-1 flex flex-col items-center pt-[8px]">
        <svg width="54" height="58" viewBox="0 0 54 58" fill="none" stroke="#666" strokeWidth="2.800">
          <rect x="3" y="5" width="21" height="21" rx="4" />
          <rect x="3" y="33" width="21" height="21" rx="4" />
          <rect x="29" y="33" width="21" height="21" rx="4" />
          <rect x="31" y="7" width="17" height="17" rx="3" transform="rotate(45 39.500 15.500)" />
        </svg>
        <div className="mt-[15px]">功能</div>
      </div>
      <div className="flex-1 flex flex-col items-center pt-[8px]">
        <svg width="56" height="58" viewBox="0 0 56 58" fill="none" stroke="#666" strokeWidth="2.800">
          <circle cx="28" cy="29" r="25.500" />
          <g fill="#666" stroke="none">
            <circle cx="17" cy="29" r="3" />
            <circle cx="28" cy="29" r="3" />
            <circle cx="39" cy="29" r="3" />
          </g>
        </svg>
        <div className="mt-[15px]">设自选</div>
      </div>
    </div>
  );
}

export default function App() {
  return (
    <main className="w-[1088px] h-[2400px] overflow-hidden bg-white flex flex-col *:shrink-0 font-['Noto_Sans_CJK_SC',sans-serif] font-[350]">
      <StatusBar />
      <Header />
      <Quote />
      <PeriodTabs />
      <IndicatorBar />
      <PriceChart />
      <VolumeBar />
      <VolumeChart />
      <TimeAxis />
      <RangeSlider />
      <AskAi />
      <Notice />
      <ContentTabs />
      <Cards />
      <BottomNav />
    </main>
  );
}
